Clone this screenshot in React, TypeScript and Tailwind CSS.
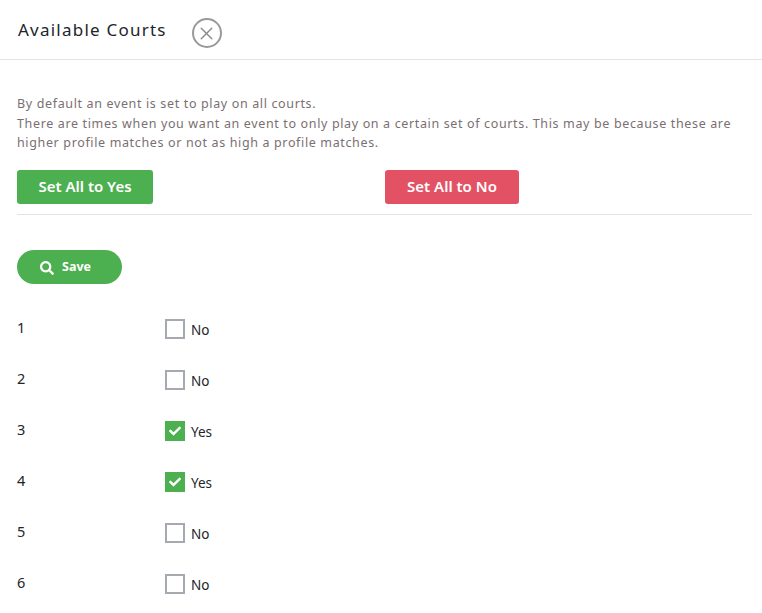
import { X } from "lucide-react";
import { FaSearch, FaCheck } from "react-icons/fa";

const courts = [
  { n: 1, on: false },
  { n: 2, on: false },
  { n: 3, on: true },
  { n: 4, on: true },
  { n: 5, on: false },
  { n: 6, on: false },
];

export default function App() {
  return (
    <div className="h-[613px] w-[762px] overflow-hidden bg-white font-['Noto_Sans',sans-serif] text-[#212529]">
      <header className="flex h-[60px] items-start border-b border-[#e4e4e4] pl-[18px]">
        <h1 className="mt-[18px] text-[17px] leading-[24px] font-normal tracking-[1.23px] text-[#212529]">Available Courts</h1>
        <button className="mt-[18px] ml-[25px] flex h-[30px] w-[30px] items-center justify-center rounded-full border-2 border-[#999999] text-[#8a8a8a]">
          <X size={21} strokeWidth={1.6} />
        </button>
      </header>
      <div className="px-[17px] pt-[34px]">
        <p className="text-[12.5px] leading-[19.5px] tracking-[0.64px] text-[#7a6f72]">
          By default an event is set to play on all courts.
          <br />
          There are times when you want an event to only play on a certain set of courts. This may be because these are higher profile matches or not as high a profile matches.
        </p>
        <div className="mt-[17px] flex w-[735px] border-b border-[#e4e4e4] pb-[10px]">
          <button className="h-[34px] w-[136px] rounded-[3px] bg-[#4caf50] text-[15px] font-semibold text-white">Set All to Yes</button>
          <button className="ml-[232px] h-[34px] w-[134px] rounded-[3px] bg-[#e35264] text-[15px] font-semibold text-white">Set All to No</button>
        </div>
        <button className="mt-[35px] flex h-[34px] w-[105px] items-center justify-center gap-[8px] rounded-full bg-[#4caf50] pt-[2px] pr-[8px] text-[12.5px] font-bold text-white">
          <FaSearch size={14} />
          Save
        </button>
        <div className="mt-[23px] flex flex-col">
          {courts.map((c) => (
            <div key={c.n} className="flex h-[51px] items-start">
              <span className="mt-[8px] w-[148px] text-[14.5px] leading-[24px]">{c.n}</span>
              <span className="mt-[11px] flex items-center">
                {c.on ? (
                  <span className="flex h-[20px] w-[20px] items-center justify-center bg-[#4caf50] text-white">
                    <FaCheck size={12} />
                  </span>
                ) : (
                  <span className="h-[20px] w-[20px] border-2 border-[#a5a9b0] bg-white" />
                )}
                <span className="mt-[2px] ml-[6px] text-[13.5px] leading-[20px]">{c.on ? "Yes" : "No"}</span>
              </span>
            </div>
          ))}
        </div>
      </div>
    </div>
  );
}
